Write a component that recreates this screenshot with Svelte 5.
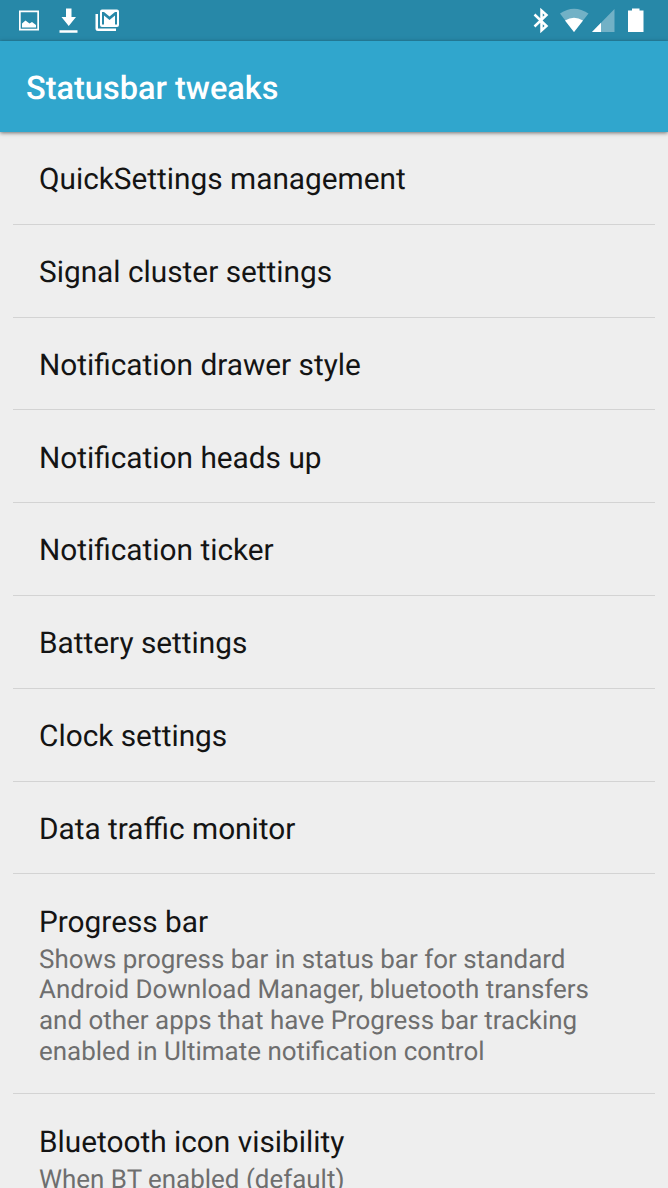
<script>
  const items = ['QuickSettings management','Signal cluster settings','Notification drawer style','Notification heads up','Notification ticker','Battery settings','Clock settings','Data traffic monitor'];
</script>

<div class="screen">
  <div class="status">
    <svg width="140" height="41" viewBox="0 0 140 41" fill="#fff">
      <path fill-rule="evenodd" d="M19 10.500h20v20H19zM20.700 12.200v16.600h16.600V12.200z"/>
      <path d="M22 27.500v-4l3.500-3 4 3 2.500-1.500 4 3v2.500z"/>
      <path d="M66 8.500h5.500V17h4.500l-7.250 9L61.500 17H66zM59.500 30.200h18v2.500h-18z"/>
      <path fill-rule="evenodd" d="M102 9.500h15a2 2 0 0 1 2 2v13.500a2 2 0 0 1-2 2h-15a2 2 0 0 1-2-2V11.500a2 2 0 0 1 2-2zm0 2.500v12.500h2V15.500l5.500 4.500 5.500-4.500v9h2V12h-2l-5.500 4.500L104 12z"/>
      <path d="M95.500 14H98v14.500h18V31H98a2.500 2.500 0 0 1-2.500-2.500z"/>
    </svg>
    <svg width="148" height="41" viewBox="520 0 148 41" fill="#fff">
      <path d="M534.500 14.500l12 11.500-5 4.500v-20l5 4.500-12 11.500" fill="none" stroke="#fff" stroke-width="2.500"/>
      <path opacity=".35" d="M560 13.500q14-9.500 28.500 0L574 32z"/><path d="M565 20.500q9-5.500 18 0L574 32z"/>
      <path opacity=".35" d="M614.500 9v23H592z"/><path d="M601 22.800V32h-9z"/>
      <path d="M632 8.500h7.500v2h4V32H628V10.500h4z"/>
    </svg>
  </div>
  <header><h1>Statusbar tweaks</h1></header>
  <main>
    {#each items as item}<div class="row"><h2>{item}</h2></div>{/each}
    <div class="row progress"><h2>Progress bar</h2><p>Shows progress bar in status bar for standard<br>Android Download Manager, bluetooth transfers<br>and other apps that have Progress bar tracking<br>enabled in Ultimate notification control</p></div>
    <div class="row last"><h2>Bluetooth icon visibility</h2><p>When BT enabled (default)</p></div>
  </main>
</div>

<style>
  :global(body){margin:0;background:#eee;overflow:hidden}
  .screen{width:668px;height:1188px;overflow:hidden;background:#eee;font-family:Roboto,sans-serif;color:#141414;text-rendering:geometricPrecision}
  .status{height:41px;background:#2788a8;display:flex;justify-content:space-between}
  header{height:91px;background:#30a6cd;display:flex;align-items:center;padding-left:26px;box-shadow:0 1px 4px #0008;position:relative}
  h1,h2,p{margin:0}
  h1{font-size:32.500px;font-weight:500;color:#fff;line-height:40px;padding-top:2px}
  main{padding:0 13px}
  .row{height:92.800px;box-sizing:border-box;border-bottom:1px solid #d3d3d3;padding:28.300px 26px 0}
  h2{font-size:29.800px;font-weight:400;line-height:40px;white-space:nowrap}
  p{font-size:25.950px;line-height:30.700px;color:#6e6e6e;white-space:nowrap;padding-top:2px}
  .progress{height:220px}
  .last{border:0}
</style>
